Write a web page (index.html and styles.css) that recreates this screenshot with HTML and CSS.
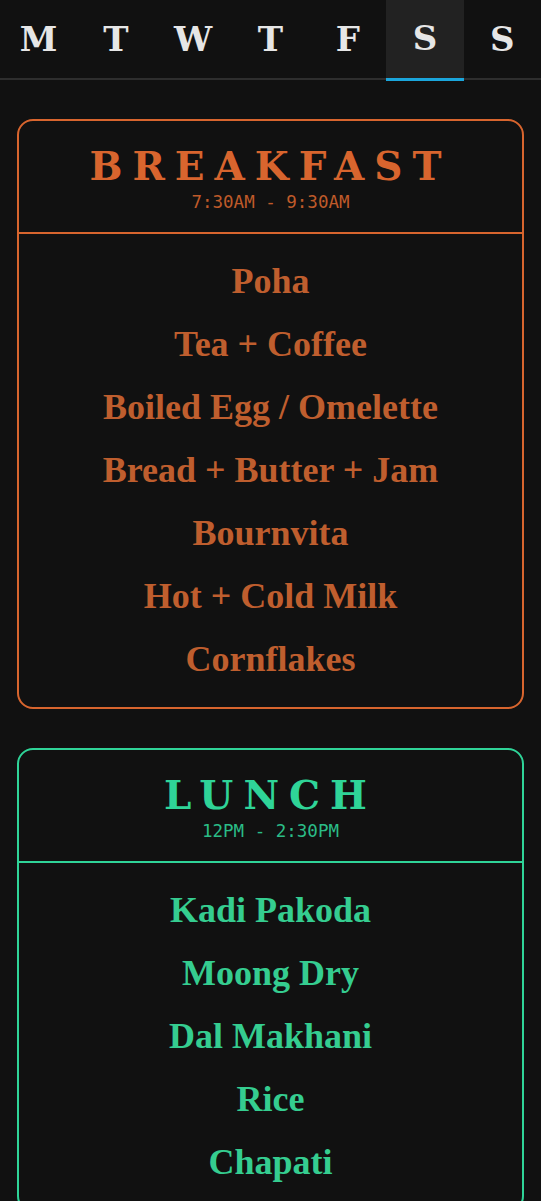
FILE: index.html
```html
<!DOCTYPE html>
<html lang="en">
<head>
<meta charset="utf-8">
<title>Mess Menu</title>
<link rel="stylesheet" href="styles.css">
</head>
<body>
<nav class="days">
  <div class="day">M</div>
  <div class="day">T</div>
  <div class="day">W</div>
  <div class="day">T</div>
  <div class="day">F</div>
  <div class="day active">S</div>
  <div class="day">S</div>
</nav>
<main class="meals">
  <section class="card breakfast">
    <header class="card-head">
      <h2 class="title">BREAKFAST</h2>
      <div class="time">7:30AM - 9:30AM</div>
    </header>
    <ul class="items">
      <li>Poha</li>
      <li>Tea + Coffee</li>
      <li>Boiled Egg / Omelette</li>
      <li>Bread + Butter + Jam</li>
      <li>Bournvita</li>
      <li>Hot + Cold Milk</li>
      <li>Cornflakes</li>
    </ul>
  </section>
  <section class="card lunch">
    <header class="card-head">
      <h2 class="title">LUNCH</h2>
      <div class="time">12PM - 2:30PM</div>
    </header>
    <ul class="items">
      <li>Kadi Pakoda</li>
      <li>Moong Dry</li>
      <li>Dal Makhani</li>
      <li>Rice</li>
      <li>Chapati</li>
    </ul>
  </section>
</main>
</body>
</html>
```
FILE: styles.css
```css
* { box-sizing: border-box; }
html, body { margin: 0; padding: 0; }
body {
  background: #111111;
  color: #e6e6e6;
  font-family: "DejaVu Serif", serif;
  overflow: hidden;
  height: 1201px;
}
.days {
  display: grid;
  grid-template-columns: repeat(7, 1fr);
  border-bottom: 2px solid #2e2e2e;
  height: 80px;
}
.day {
  display: flex;
  align-items: center;
  justify-content: center;
  font-family: "DejaVu Serif", serif;
  font-weight: bold;
  font-size: 34px;
  color: #e6e6e6;
  height: 81px;
  padding-bottom: 3px;
}
.day.active {
  background: #222222;
  border-bottom: 3px solid #1ba6dc;
}
.meals {
  padding: 39px 17px 0;
  display: flex;
  flex-direction: column;
  gap: 39px;
}
.card {
  border: 2px solid currentColor;
  border-radius: 16px;
}
.breakfast { color: #d8652e; }
.lunch { color: #2fd498; }
.card-head {
  text-align: center;
  border-bottom: 2px solid currentColor;
  padding: 20px 0 19px;
}
.title {
  margin: 0;
  font-family: "DejaVu Serif", serif;
  font-weight: bold;
  font-size: 39px;
  line-height: 50px;
  letter-spacing: 10px;
}
.time {
  font-family: "DejaVu Sans Mono", monospace;
  font-size: 17.5px;
  line-height: 22px;
  opacity: 0.88;
}
.items {
  list-style: none;
  margin: 0;
  padding: 16px 0;
  text-align: center;
  font-family: "Liberation Serif", serif;
  font-weight: bold;
  font-size: 36px;
  line-height: 63px;
}
.breakfast .items { color: #bf5e2e; }
.lunch .items { color: #35cd90; }
```
